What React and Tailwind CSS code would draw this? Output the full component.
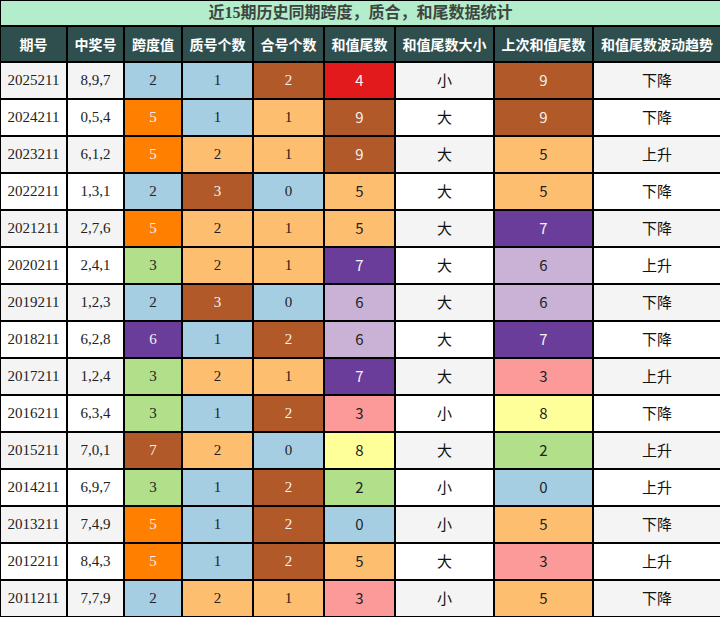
const COLORS = {
  lb: "bg-[#a6cee3] text-[#222]",
  or: "bg-[#ff7f00] text-[#f3f3f3]",
  br: "bg-[#b15928] text-[#f3f3f3]",
  lo: "bg-[#fdbf6f] text-[#222]",
  gr: "bg-[#b2df8a] text-[#222]",
  pu: "bg-[#6a3d9a] text-[#f3f3f3]",
  lp: "bg-[#cab2d6] text-[#222]",
  pk: "bg-[#fb9a99] text-[#222]",
  ye: "bg-[#ffff99] text-[#222]",
  rd: "bg-[#e31a1c] text-[#f3f3f3]",
};

// 期号, 中奖号, [跨度], [质号], [合号], [和值尾], 大小, [上次], 趋势
const rows = [
  ["2025211", "8,9,7", [2, "lb"], [1, "lb"], [2, "br"], [4, "rd"], "小", [9, "br"], "下降"],
  ["2024211", "0,5,4", [5, "or"], [1, "lb"], [1, "lo"], [9, "br"], "大", [9, "br"], "下降"],
  ["2023211", "6,1,2", [5, "or"], [2, "lo"], [1, "lo"], [9, "br"], "大", [5, "lo"], "上升"],
  ["2022211", "1,3,1", [2, "lb"], [3, "br"], [0, "lb"], [5, "lo"], "大", [5, "lo"], "下降"],
  ["2021211", "2,7,6", [5, "or"], [2, "lo"], [1, "lo"], [5, "lo"], "大", [7, "pu"], "下降"],
  ["2020211", "2,4,1", [3, "gr"], [2, "lo"], [1, "lo"], [7, "pu"], "大", [6, "lp"], "上升"],
  ["2019211", "1,2,3", [2, "lb"], [3, "br"], [0, "lb"], [6, "lp"], "大", [6, "lp"], "下降"],
  ["2018211", "6,2,8", [6, "pu"], [1, "lb"], [2, "br"], [6, "lp"], "大", [7, "pu"], "下降"],
  ["2017211", "1,2,4", [3, "gr"], [2, "lo"], [1, "lo"], [7, "pu"], "大", [3, "pk"], "上升"],
  ["2016211", "6,3,4", [3, "gr"], [1, "lb"], [2, "br"], [3, "pk"], "小", [8, "ye"], "下降"],
  ["2015211", "7,0,1", [7, "br"], [2, "lo"], [0, "lb"], [8, "ye"], "大", [2, "gr"], "上升"],
  ["2014211", "6,9,7", [3, "gr"], [1, "lb"], [2, "br"], [2, "gr"], "小", [0, "lb"], "上升"],
  ["2013211", "7,4,9", [5, "or"], [1, "lb"], [2, "br"], [0, "lb"], "小", [5, "lo"], "下降"],
  ["2012211", "8,4,3", [5, "or"], [1, "lb"], [2, "br"], [5, "lo"], "大", [3, "pk"], "上升"],
  ["2011211", "7,7,9", [2, "lb"], [2, "lo"], [1, "lo"], [3, "pk"], "小", [5, "lo"], "下降"],
];

const widths = ["w-[65px]", "w-[55px]", "w-[56px]", "w-[69px]", "w-[69px]", "w-[69px]", "w-[97px]", "w-[97px]", "w-[126px]"];
const headers = ["期号", "中奖号", "跨度值", "质号个数", "合号个数", "和值尾数", "和值尾数大小", "上次和值尾数", "和值尾数波动趋势"];

const serif = "font-['Liberation_Serif','Noto_Sans_CJK_SC',serif]";
const sans = "font-['Noto_Sans_CJK_SC',sans-serif]";

const Cell = ({ w, className, children }) => (
  <div className={`${w} shrink-0 flex items-center justify-center ${className}`}>{children}</div>
);

export default function App() {
  return (
    <div className="w-[720px] h-[617px] overflow-hidden bg-black pl-px pt-px flex flex-col gap-[2px]">
      <div className={`h-[24px] shrink-0 bg-[#b3edcb] flex items-center justify-center text-[16px] font-bold text-[#3d4640] ${serif}`}>
        近15期历史同期跨度，质合，和尾数据统计
      </div>
      <div className="h-[34px] shrink-0 flex gap-[2px]">
        {headers.map((h, i) => (
          <Cell key={i} w={widths[i]} className={`bg-[#2f4f4f] text-white text-[14px] font-bold ${sans}`}>
            {h}
          </Cell>
        ))}
      </div>
      {rows.map((r, ri) => {
        const plain = ri % 2 === 0 ? "bg-[#f4f4f4]" : "bg-white";
        return (
          <div key={ri} className="h-[35px] shrink-0 flex gap-[2px] text-[15px]">
            <Cell w={widths[0]} className={`${plain} text-[#222] ${serif}`}>{r[0]}</Cell>
            <Cell w={widths[1]} className={`${plain} text-[#222] ${serif}`}>{r[1]}</Cell>
            <Cell w={widths[2]} className={`${COLORS[r[2][1]]} ${serif}`}>{r[2][0]}</Cell>
            <Cell w={widths[3]} className={`${COLORS[r[3][1]]} ${serif}`}>{r[3][0]}</Cell>
            <Cell w={widths[4]} className={`${COLORS[r[4][1]]} ${serif}`}>{r[4][0]}</Cell>
            <Cell w={widths[5]} className={`${COLORS[r[5][1]]} ${sans}`}>{r[5][0]}</Cell>
            <Cell w={widths[6]} className={`${plain} text-[#111] ${sans}`}>{r[6]}</Cell>
            <Cell w={widths[7]} className={`${COLORS[r[7][1]]} ${sans}`}>{r[7][0]}</Cell>
            <Cell w={widths[8]} className={`${plain} text-[#111] ${sans}`}>{r[8]}</Cell>
          </div>
        );
      })}
    </div>
  );
}
